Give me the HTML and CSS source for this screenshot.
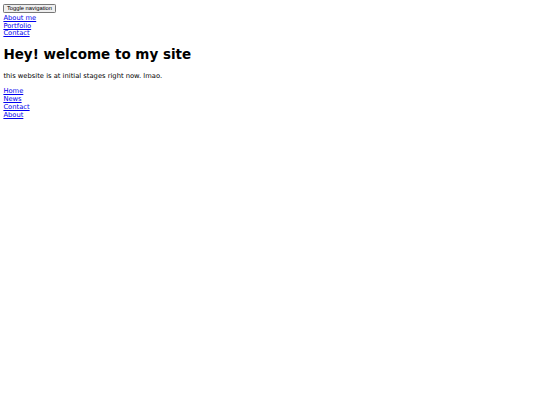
FILE: index.html
```html
<!DOCTYPE html>
<html>
<head>
<meta charset="utf-8">
<link rel="stylesheet" href="styles.css">
<title>Site</title>
</head>
<body>
<nav class="topnav">
  <button class="toggle">Toggle navigation</button>
  <div class="links nav-links">
    <a href="#">About me</a>
    <a href="#">Portfolio</a>
    <a href="#">Contact</a>
  </div>
</nav>
<main>
  <h1 class="title">Hey! welcome to my site</h1>
  <p class="intro">this website is at initial stages right now. lmao.</p>
  <div class="links">
    <a href="#">Home</a>
    <a href="#">News</a>
    <a href="#">Contact</a>
    <a href="#">About</a>
  </div>
</main>
</body>
</html>
```
FILE: styles.css
```css
body {
  margin: 3.375px;
  font-family: "DejaVu Sans", sans-serif;
  font-size: 6.75px;
  line-height: 7.95px;
  color: #000;
  background: #fff;
}
.toggle {
  display: block;
  font-family: "Liberation Sans", Arial, sans-serif;
  font-size: 5.8px;
  line-height: 6.5px;
  height: 8.8px;
  padding: 0 2.53px;
  margin: 0.6px 0 0;
  border: 0.84px solid #767676;
  border-radius: 1.3px;
  background: #efefef;
  color: #000;
}
.links {
  display: flex;
  flex-direction: column;
  align-items: flex-start;
}
.nav-links {
  margin-top: 1.8px;
}
.links a {
  color: #0000ee;
}
.title {
  font-size: 13.5px;
  line-height: 15.7px;
  font-weight: bold;
  margin: 9.05px 0 9.6px;
}
.intro {
  margin: 6.75px 0 7.75px;
}
```
